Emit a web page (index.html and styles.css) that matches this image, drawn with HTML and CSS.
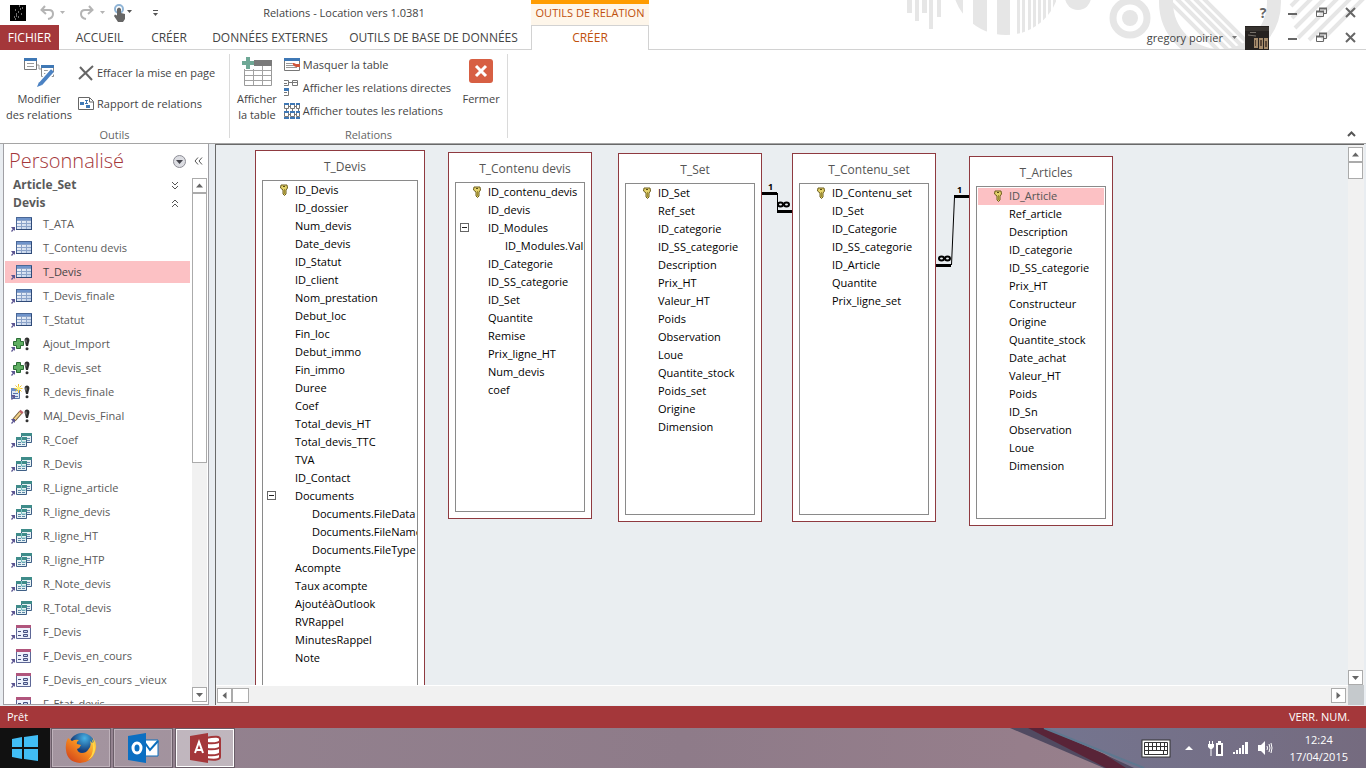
FILE: index.html
```html
<!DOCTYPE html>
<html lang="fr">
<head>
<meta charset="utf-8">
<title>Relations - Location vers 1.0381</title>
<link rel="stylesheet" href="styles.css">
</head>
<body>
<svg class="sprite" aria-hidden="true">
  <defs>
    <linearGradient id="cell" x1="0" y1="0" x2="1" y2="1"><stop offset="0" stop-color="#fff"/><stop offset="1" stop-color="#b9cbe6"/></linearGradient>
    <symbol id="arrow" viewBox="0 0 5 5"><path d="M0 0h4v4L2.800 2.800 1 5 0 4l1.700-1.800z" fill="#5b5591"/></symbol>
    <symbol id="i-table" viewBox="0 0 22 16">
      <rect x="5.500" y="1.500" width="15" height="12" fill="url(#cell)" stroke="#4a6796"/>
      <path d="M6 2h14v2H6z" fill="#6f94cb"/>
      <path d="M6 4.500h14M6 7.500h14M6 10.500h14M10.500 4v9M15.500 4v9" stroke="#8ba3c9" fill="none"/>
      <path d="M5 13.500h16M20.500 2v12" stroke="#2f4a78"/>
      <use href="#arrow" x="0" y="11" width="5" height="5"/>
    </symbol>
    <symbol id="bang" viewBox="0 0 6 14"><path d="M1 1.500Q3-.5 5 1.500 5.800 3 5 5L4 9H2L1 5Q.2 3 1 1.500z" fill="#2b2b2b"/><circle cx="3" cy="11.700" r="1.500" fill="#333"/><path d="M2 2.500v3" stroke="#999"/></symbol>
    <symbol id="i-add" viewBox="0 0 22 16">
      <path d="M5.500 2.500h4v3h3v4h-3v3h-4v-3h-3v-4h3z" fill="#5fae62" stroke="#2a6c35"/>
      <use href="#bang" x="13" y="1" width="6" height="14"/><use href="#arrow" x="0" y="11" width="5" height="5"/>
    </symbol>
    <symbol id="i-make" viewBox="0 0 22 16">
      <path d="M.5 4.500h8v10h-8z" fill="#dbe6f5" stroke="#5775a8"/><path d="M0 4h9v3H0z" fill="#6d8fc6"/><path d="M2 9.500h5M2 12.500h5" stroke="#5775a8"/>
      <path d="M7.500 0v9M3.500 4.500h8M4.500 1.500l6 6M10.500 1.500l-6 6" stroke="#f0c22d"/><circle cx="7.500" cy="4.500" r="2" fill="#fff27a"/>
      <use href="#bang" x="13" y="1" width="6" height="14"/><use href="#arrow" x="0" y="11" width="5" height="5"/>
    </symbol>
    <symbol id="i-update" viewBox="0 0 22 16">
      <path d="M3 12L10 4" stroke="#6f5a34" stroke-width="4"/><path d="M3 12L10 4" stroke="#f1cf8a" stroke-width="2"/><path d="M9.500 4.700L11 3" stroke="#c0606a" stroke-width="4"/>
      <use href="#bang" x="13" y="1" width="6" height="14"/><use href="#arrow" x="0" y="11" width="5" height="5"/>
    </symbol>
    <symbol id="i-query" viewBox="0 0 22 16">
      <path d="M10.500 1.500h10v9h-10z" fill="#e6f1f3" stroke="#3f5f86"/><path d="M10 1h11v3H10z" fill="#3f8c8a"/><path d="M12 6.500h3M16 6.500h3M16 8.500h3" stroke="#6a8db2"/>
      <path d="M5.500 5.500h10v9h-10z" fill="#e6f1f3" stroke="#3f5f86"/><path d="M5 5h11v3H5z" fill="#3f8c8a"/><path d="M7 10.500h3M11 10.500h3M7 12.500h3M11 12.500h3" stroke="#5b86a8"/><path d="M10.500 5v5H15" stroke="#77bfc0" fill="none"/>
      <use href="#arrow" x="0" y="11" width="5" height="5"/>
    </symbol>
    <symbol id="i-form" viewBox="0 0 22 16">
      <path d="M5.500 1.500h14v13h-14z" fill="#eef2fc" stroke="#5d6796"/><path d="M5 1h15v3H5z" fill="#b0557c"/>
      <path d="M7 7.500h3M7 11.500h3" stroke="#46507f"/><path d="M12.500 6.500h4v2h-4zM12.500 10.500h4v2h-4z" fill="#c4d3ef" stroke="#46507f"/>
      <use href="#arrow" x="0" y="11" width="5" height="5"/>
    </symbol>
    <symbol id="key" viewBox="0 0 8 12"><path d="M1 1h6l.5 3L6 6v4L4.500 11.500 3 10V6L.5 4z" fill="#e4d36b" stroke="#6b5d1e"/><path d="M3 2.500h2" stroke="#574b15"/><path d="M4.500 5v5" stroke="#a08f35"/></symbol>
    <symbol id="up" viewBox="0 0 9 9"><path d="M1 6.500h7L4.500 2.500z" fill="#666"/></symbol>
    <symbol id="down" viewBox="0 0 9 9"><path d="M1 3h7L4.500 7z" fill="#666"/></symbol>
    <symbol id="left" viewBox="0 0 9 9"><path d="M6.500 1v7l-4-3.500z" fill="#666"/></symbol>
    <symbol id="right" viewBox="0 0 9 9"><path d="M2.500 1v7l4-3.500z" fill="#666"/></symbol>
    <symbol id="min" viewBox="0 0 11 11"><path d="M1 7h9" stroke="#666" stroke-width="2"/></symbol>
    <symbol id="restore" viewBox="0 0 11 11"><path d="M3.500 4V1.500h7v5H8M.5 4.500h7v5h-7z" fill="none" stroke="#666"/><path d="M3 1.500h8M0 4.500h8" stroke="#666" stroke-width="2"/></symbol>
    <symbol id="close" viewBox="0 0 11 11"><path d="M1 1l9 9M10 1l-9 9" stroke="#666" stroke-width="2"/></symbol>
  </defs>
</svg>

<header class="top">
  <svg class="decor" viewBox="860 0 506 49" aria-hidden="true">
    <defs>
      <clipPath id="disk"><circle cx="1006" cy="-19" r="54"/></clipPath>
      <clipPath id="hole"><circle cx="1220" cy="2" r="61"/></clipPath>
    </defs>
    <g fill="#e6e6e6">
      <path d="M907 0h5v13h-5zM915 0h4v21h-4zM922 0h5v13h-5zM929 0h4v29h-4zM937 0h4v17h-4z"/>
      <path clip-path="url(#disk)" d="M955 0h8v30h-8zM973 0h14v40h-14zM997 0h13v40h-13zM1017 0h3v40h-3zM1022 0h3v40h-3zM1028 0h3v40h-3zM1033 0h3v40h-3zM1038 0h3v40h-3zM1043 0h3v40h-3zM1048 0h3v40h-3zM1053 0h3v40h-3z"/>
      <circle cx="1078" cy="-3" r="13"/>
    </g>
    <circle cx="1130" cy="18" r="17" fill="none" stroke="#e6e6e6" stroke-width="7"/><circle cx="1130" cy="18" r="8" fill="#e6e6e6"/>
    <circle cx="1220" cy="2" r="54" fill="none" stroke="#e6e6e6" stroke-width="14"/>
    <path clip-path="url(#hole)" d="M1160-8l70 70M1174-4l60 60M1183-4l60 60M1192-4l56 56M1201-4l50 50" stroke="#e6e6e6" stroke-width="4"/>
    <path d="M1303-6l-12 12M1316-6l-24 24M1329-6l-34 34M1342-6l-44 44M1355-6l-46 46M1368-6l-46 46" stroke="#e6e6e6" stroke-width="4"/>
  </svg>
  <div class="top-left">
    <div class="titlebar">
      <div class="qat">
        <svg width="16" height="16" viewBox="0 0 16 16"><path d="M0 0h16v16H0z" fill="#000"/><path d="M9 1h1M12 3h1M5 5h1M8 7h1M6 9h1M11 9h1M4 12h1M5 14h1M8 12h1M6 11h1M10 4h1" stroke="#ddd"/></svg>
        <button aria-label="Annuler"><svg width="26" height="16" viewBox="0 0 26 16"><path d="M5 1L1.500 5 6 9M2 5h7q4 0 4 4t-5 5" fill="none" stroke="#b4b4b4" stroke-width="2"/><path d="M20 6h5l-2.500 3z" fill="#b4b4b4"/></svg></button>
        <button aria-label="Rétablir"><svg width="26" height="16" viewBox="0 0 26 16"><path d="M9 1l3.500 4L8 9M12 5H5Q1 5 1 9t5 5" fill="none" stroke="#b4b4b4" stroke-width="2"/><path d="M20 6h5l-2.500 3z" fill="#b4b4b4"/></svg></button>
        <button aria-label="Mode tactile"><svg width="24" height="18" viewBox="0 0 24 18"><circle cx="5" cy="5" r="4" fill="none" stroke="#8fb4d6" stroke-width="2"/><path d="M3 5q2-3 4 0v4l4 1v5l-2 3H4L0 12l1-1.500 2 1z" fill="#666"/><path d="M13 6h5l-2.500 3z" fill="#555"/></svg></button>
        <button aria-label="Personnaliser"><svg width="7" height="8" viewBox="0 0 7 8"><path d="M1 1.500h5" stroke="#555"/><path d="M1 4h5L3.500 7z" fill="#555"/></svg></button>
      </div>
      <h1 class="title">Relations - Location vers 1.0381</h1>
    </div>
    <nav class="tabs">
      <button class="tab tab-file">FICHIER</button>
      <button class="tab tab-home">ACCUEIL</button>
      <button class="tab tab-create">CRÉER</button>
      <button class="tab tab-data">DONNÉES EXTERNES</button>
      <button class="tab tab-tools">OUTILS DE BASE DE DONNÉES</button>
    </nav>
  </div>
  <div class="context">
    <div class="context-name">OUTILS DE RELATION</div>
    <button class="context-tab">CRÉER</button>
  </div>
  <div class="top-right">
    <div class="winrow">
      <button class="help" aria-label="Aide">?</button>
      <button aria-label="Réduire"><svg width="11" height="11"><use href="#min"/></svg></button>
      <button aria-label="Restaurer"><svg width="11" height="11"><use href="#restore"/></svg></button>
      <button aria-label="Fermer la fenêtre"><svg width="11" height="11"><use href="#close"/></svg></button>
    </div>
    <div class="winrow">
      <button class="account">gregory poirier <svg width="5" height="3" viewBox="0 0 5 3"><path d="M0 0h5L2.500 3z" fill="#777"/></svg></button>
      <svg class="avatar" width="24" height="24" viewBox="0 0 24 24"><path d="M0 0h24v24H0z" fill="#262220"/><path d="M0 1h24v4H0z" fill="#37332f"/><path d="M5 6.500h6M3 9l8 1" stroke="#77716a"/><path d="M9 12h4v10H9zM14 12h4v11h-4zM19 12h4v11h-4z" fill="#a58b6c"/><path d="M10 14h1v6h-1zM15 14h2v6h-2zM20 15h2v6h-2z" fill="#5a4636"/></svg>
      <button aria-label="Réduire le document"><svg width="11" height="11"><use href="#min"/></svg></button>
      <button aria-label="Restaurer le document"><svg width="11" height="11"><use href="#restore"/></svg></button>
      <button aria-label="Fermer le document"><svg width="11" height="11"><use href="#close"/></svg></button>
    </div>
  </div>
</header>

<section class="ribbon">
  <div class="group group-tools">
    <div class="group-body">
      <button class="big big-edit">
        <svg width="32" height="32" viewBox="0 0 32 32"><path d="M1.500 1.500h12v11h-12z" fill="#fff" stroke="#777"/><path d="M1 1h13v3H1z" fill="#3f78b5"/><path d="M4 6.500h7M4 9.500h7" stroke="#9a9a9a"/><path d="M14 8h2v4h3" fill="none" stroke="#999"/><path d="M18.500 8.500h12v11h-12z" fill="#fff" stroke="#888"/><path d="M18 8h13v3H18z" fill="#3f78b5"/><path d="M21 13.500h6M21 16.500h4" stroke="#9a9a9a"/><path d="M29 14L17 28" stroke="#fff" stroke-width="7"/><path d="M29.500 13.500L17.500 27" stroke="#4b82c3" stroke-width="4"/><path d="M16 25l3 3-5 2z" fill="#4b82c3"/></svg>
        <span>Modifier<br>des relations</span>
      </button>
      <div class="stack stack-two">
        <button class="small"><svg width="16" height="16" viewBox="0 0 16 16"><path d="M2 2l12 13M15 1L1 14" stroke="#666" stroke-width="2"/></svg>Effacer la mise en page</button>
        <button class="small"><svg width="16" height="16" viewBox="0 0 16 16"><path d="M.5 1.500h11l4 4v8H.5z" fill="#fff" stroke="#666"/><path d="M11.500 2v4h4" fill="none" stroke="#666"/><path d="M2 6h4v3H2zM8 9h4v3H8z" fill="#3f78b5"/><path d="M7 4.500h3M7 7.500h3M8.500 4v4" stroke="#3f78b5"/></svg>Rapport de relations</button>
      </div>
    </div>
    <div class="group-name">Outils</div>
  </div>
  <div class="group group-rel">
    <div class="group-body">
      <button class="big big-show">
        <svg width="32" height="32" viewBox="0 0 32 32"><path d="M3.500 4.500h27v24h-27z" fill="#fff" stroke="#9a9a9a"/><path d="M13 3h18v6H13z" fill="#7a7a7a"/><path d="M4 13.500h26M4 18.500h26M4 23.500h26M12.500 9v19M21.500 9v19" stroke="#a2a2a2"/><path d="M0 0h13v12H0z" fill="#fff"/><path d="M3.500 12v3M4 13.500h9M12.500 12v3" stroke="#a2a2a2"/><path d="M5 0h4v4h4v4H9v4H5V8H1V4h4z" fill="#6fa896"/></svg>
        <span>Afficher<br>la table</span>
      </button>
      <div class="stack stack-three">
        <button class="small"><svg width="16" height="16" viewBox="0 0 16 16"><path d="M.5 1.500h15v12H.5z" fill="#fff" stroke="#777"/><path d="M0 1h16v3H0z" fill="#3f78b5"/><path d="M2 6.500h6M2 8.500h8M2 10.500h11" stroke="#999"/><path d="M8 6h2l2 1h4v3h-4l-2-1z" fill="#d0553a"/></svg>Masquer la table</button>
        <button class="small"><svg width="16" height="16" viewBox="0 0 16 16"><path d="M0 .5h4.500v5H0M0 3.500h3M5 2.500h3M0 12.500h3M0 15.500h4.500V8" fill="none" stroke="#777"/><path d="M8.500 .5h5v5h-5zM8 2.500h6" fill="#fff" stroke="#777"/><path d="M0 8h5v3H0z" fill="#3f78b5"/></svg>Afficher les relations directes</button>
        <button class="small"><svg width="16" height="16" viewBox="0 0 16 16"><path d="M.5 1.500h4v4h-4zM6.500 1.500h4v4h-4zM12.500 1.500h3v4h-3zM.5 9.500h4v4h-4zM6.500 9.500h4v4h-4zM12.500 9.500h3v4h-3zM5 3.500h1M11 3.500h1M5 11.500h1M11 11.500h1M2.500 6v3M8.500 6v3M14.500 6v3" fill="none" stroke="#777"/><path d="M0 0h5v2H0zM6 0h5v2H6zM12 0h4v2h-4zM0 8h5v2H0zM6 8h5v2H6zM12 8h4v2h-4zM0 14h5v2H0zM6 14h5v2H6zM12 14h4v2h-4z" fill="#3f78b5"/></svg>Afficher toutes les relations</button>
      </div>
      <button class="big big-close">
        <svg width="32" height="32" viewBox="0 0 32 32"><rect x="4" y="2" width="24" height="24" rx="3" fill="#d75f43"/><path d="M11 9l10 10M21 9L11 19" stroke="#fff" stroke-width="3"/></svg>
        <span>Fermer</span>
      </button>
    </div>
    <div class="group-name">Relations</div>
  </div>
  <button class="collapse" aria-label="Réduire le ruban"><svg width="9" height="6" viewBox="0 0 9 6"><path d="M1 5l3.500-3.500L8 5" fill="none" stroke="#555" stroke-width="2"/></svg></button>
</section>

<main class="work">
  <aside class="nav">
    <div class="nav-head">
      <h2>Personnalisé</h2>
      <button aria-label="Options"><svg width="13" height="13" viewBox="0 0 13 13"><circle cx="6.500" cy="6.500" r="6" fill="#dcdde2" stroke="#8d8d95"/><path d="M3 5h7L6.500 9z" fill="#44444c"/></svg></button>
      <button aria-label="Masquer le volet"><svg width="9" height="8" viewBox="0 0 9 8"><path d="M4 .5L1 4l3 3.500M8 .5L5 4l3 3.500" fill="none" stroke="#555"/></svg></button>
    </div>
    <div class="nav-body">
      <div class="nav-list">
        <button class="nav-group">Article_Set <svg width="8" height="9" viewBox="0 0 8 9"><path d="M1 1l3 3 3-3M1 5l3 3 3-3" fill="none" stroke="#555"/></svg></button>
        <button class="nav-group">Devis <svg width="8" height="9" viewBox="0 0 8 9"><path d="M1 4l3-3 3 3M1 8l3-3 3 3" fill="none" stroke="#555"/></svg></button>
        <ul>
          <li><a href="#"><svg><use href="#i-table"/></svg>T_ATA</a></li>
          <li><a href="#"><svg><use href="#i-table"/></svg>T_Contenu devis</a></li>
          <li><a href="#" class="selected"><svg><use href="#i-table"/></svg>T_Devis</a></li>
          <li><a href="#"><svg><use href="#i-table"/></svg>T_Devis_finale</a></li>
          <li><a href="#"><svg><use href="#i-table"/></svg>T_Statut</a></li>
          <li><a href="#"><svg><use href="#i-add"/></svg>Ajout_Import</a></li>
          <li><a href="#"><svg><use href="#i-add"/></svg>R_devis_set</a></li>
          <li><a href="#"><svg><use href="#i-make"/></svg>R_devis_finale</a></li>
          <li><a href="#"><svg><use href="#i-update"/></svg>MAJ_Devis_Final</a></li>
          <li><a href="#"><svg><use href="#i-query"/></svg>R_Coef</a></li>
          <li><a href="#"><svg><use href="#i-query"/></svg>R_Devis</a></li>
          <li><a href="#"><svg><use href="#i-query"/></svg>R_Ligne_article</a></li>
          <li><a href="#"><svg><use href="#i-query"/></svg>R_ligne_devis</a></li>
          <li><a href="#"><svg><use href="#i-query"/></svg>R_ligne_HT</a></li>
          <li><a href="#"><svg><use href="#i-query"/></svg>R_ligne_HTP</a></li>
          <li><a href="#"><svg><use href="#i-query"/></svg>R_Note_devis</a></li>
          <li><a href="#"><svg><use href="#i-query"/></svg>R_Total_devis</a></li>
          <li><a href="#"><svg><use href="#i-form"/></svg>F_Devis</a></li>
          <li><a href="#"><svg><use href="#i-form"/></svg>F_Devis_en_cours</a></li>
          <li><a href="#"><svg><use href="#i-form"/></svg>F_Devis_en_cours _vieux</a></li>
          <li><a href="#"><svg><use href="#i-form"/></svg>F_Etat_devis</a></li>
        </ul>
      </div>
      <div class="vbar">
        <button aria-label="Monter"><svg width="9" height="9"><use href="#up"/></svg></button>
        <div class="thumb thumb-nav"></div>
        <button class="last" aria-label="Descendre"><svg width="9" height="9"><use href="#down"/></svg></button>
      </div>
    </div>
  </aside>

  <section class="pane">
    <div class="canvas">
      <article class="entity t-devis">
        <h3>T_Devis</h3>
        <ul>
          <li><svg class="key"><use href="#key"/></svg><span>ID_Devis</span></li>
          <li><span>ID_dossier</span></li><li><span>Num_devis</span></li><li><span>Date_devis</span></li><li><span>ID_Statut</span></li><li><span>ID_client</span></li><li><span>Nom_prestation</span></li><li><span>Debut_loc</span></li><li><span>Fin_loc</span></li><li><span>Debut_immo</span></li><li><span>Fin_immo</span></li><li><span>Duree</span></li><li><span>Coef</span></li><li><span>Total_devis_HT</span></li><li><span>Total_devis_TTC</span></li><li><span>TVA</span></li><li><span>ID_Contact</span></li>
          <li><button class="fold" aria-label="Replier Documents"></button><span>Documents</span></li>
          <li class="sub"><span>Documents.FileData</span></li><li class="sub"><span>Documents.FileName</span></li><li class="sub"><span>Documents.FileType</span></li>
          <li><span>Acompte</span></li><li><span>Taux acompte</span></li><li><span>AjoutéàOutlook</span></li><li><span>RVRappel</span></li><li><span>MinutesRappel</span></li><li><span>Note</span></li>
        </ul>
      </article>
      <article class="entity t-contenu-devis">
        <h3>T_Contenu devis</h3>
        <ul>
          <li><svg class="key"><use href="#key"/></svg><span>ID_contenu_devis</span></li>
          <li><span>ID_devis</span></li>
          <li><button class="fold" aria-label="Replier ID_Modules"></button><span>ID_Modules</span></li>
          <li class="sub"><span>ID_Modules.Value</span></li>
          <li><span>ID_Categorie</span></li><li><span>ID_SS_categorie</span></li><li><span>ID_Set</span></li><li><span>Quantite</span></li><li><span>Remise</span></li><li><span>Prix_ligne_HT</span></li><li><span>Num_devis</span></li><li><span>coef</span></li>
        </ul>
      </article>
      <article class="entity t-set">
        <h3>T_Set</h3>
        <ul>
          <li><svg class="key"><use href="#key"/></svg><span>ID_Set</span></li>
          <li><span>Ref_set</span></li><li><span>ID_categorie</span></li><li><span>ID_SS_categorie</span></li><li><span>Description</span></li><li><span>Prix_HT</span></li><li><span>Valeur_HT</span></li><li><span>Poids</span></li><li><span>Observation</span></li><li><span>Loue</span></li><li><span>Quantite_stock</span></li><li><span>Poids_set</span></li><li><span>Origine</span></li><li><span>Dimension</span></li>
        </ul>
      </article>
      <article class="entity t-contenu-set">
        <h3>T_Contenu_set</h3>
        <ul>
          <li><svg class="key"><use href="#key"/></svg><span>ID_Contenu_set</span></li>
          <li><span>ID_Set</span></li><li><span>ID_Categorie</span></li><li><span>ID_SS_categorie</span></li><li><span>ID_Article</span></li><li><span>Quantite</span></li><li><span>Prix_ligne_set</span></li>
        </ul>
      </article>
      <article class="entity t-articles">
        <h3>T_Articles</h3>
        <ul>
          <li class="picked"><svg class="key"><use href="#key"/></svg><span>ID_Article</span></li>
          <li><span>Ref_article</span></li><li><span>Description</span></li><li><span>ID_categorie</span></li><li><span>ID_SS_categorie</span></li><li><span>Prix_HT</span></li><li><span>Constructeur</span></li><li><span>Origine</span></li><li><span>Quantite_stock</span></li><li><span>Date_achat</span></li><li><span>Valeur_HT</span></li><li><span>Poids</span></li><li><span>ID_Sn</span></li><li><span>Observation</span></li><li><span>Loue</span></li><li><span>Dimension</span></li>
        </ul>
      </article>
      <svg class="links" width="220" height="100" viewBox="760 170 220 100">
        <path d="M762 193.500h15M777 211.500h15M936 265.500h15M954 196.500h15" stroke="#000" stroke-width="3"/>
        <path d="M777.500 193v18M951.500 265L954.500 197" stroke="#000"/>
        <g fill="none" stroke="#000" stroke-width="2"><ellipse cx="780.500" cy="204.500" rx="2.500" ry="2"/><ellipse cx="786.500" cy="204.500" rx="2.500" ry="2"/><ellipse cx="941.500" cy="258.500" rx="2.500" ry="2"/><ellipse cx="947.500" cy="258.500" rx="2.500" ry="2"/></g>
        <text x="768" y="190">1</text><text x="957" y="193">1</text>
      </svg>
    </div>
    <div class="vbar vbar-pane">
      <button aria-label="Monter"><svg width="9" height="9"><use href="#up"/></svg></button>
      <div class="thumb thumb-v"></div>
      <button class="last" aria-label="Descendre"><svg width="9" height="9"><use href="#down"/></svg></button>
    </div>
    <div class="hbar">
      <button aria-label="Gauche"><svg width="9" height="9"><use href="#left"/></svg></button>
      <div class="thumb thumb-h"></div>
      <button class="last" aria-label="Droite"><svg width="9" height="9"><use href="#right"/></svg></button>
    </div>
    <div class="corner"></div>
  </section>
</main>

<div class="status"><span>Prêt</span><span>VERR. NUM.</span></div>

<footer class="taskbar">
  <svg class="wall" viewBox="0 0 1366 40" preserveAspectRatio="none" aria-hidden="true">
    <defs>
      <linearGradient id="w1"><stop offset="0" stop-color="#958491"/><stop offset=".5" stop-color="#8e7b89"/><stop offset=".75" stop-color="#967e8b"/><stop offset="1" stop-color="#9b848d"/></linearGradient>
      <linearGradient id="w2"><stop offset="0" stop-color="#747590"/><stop offset="1" stop-color="#756b7f"/></linearGradient>
    </defs>
    <path d="M0 0h1366v40H0z" fill="url(#w1)"/>
    <path d="M1040 0h326v40h-234L1104 25z" fill="url(#w2)"/>
    <path d="M1010 0h35l59 26 30 14h-30z" fill="#514a61"/>
    <path d="M1028 0h16l60 26 22 14h-20z" fill="#592438"/>
    <path d="M1044 0l60 24 40 16" stroke="#5e7890" stroke-width="2" fill="none"/>
  </svg>
  <button class="start" aria-label="Démarrer"><svg width="26" height="26" viewBox="0 0 26 26"><path d="M0 4l10-2v10H0zM12 2l14-2v12H12zM0 14h10v10L0 22zM12 14h14v12l-14-2z" fill="#41bdf5"/></svg></button>
  <button class="app" aria-label="Firefox"><svg width="32" height="32" viewBox="0 0 32 32">
    <defs><radialGradient id="globe" cx=".6" cy=".2"><stop offset="0" stop-color="#47b2e6"/><stop offset="1" stop-color="#153e7c"/></radialGradient><linearGradient id="fox" x1="1" y1="0" x2="0" y2="1"><stop offset="0" stop-color="#ffe04d"/><stop offset=".45" stop-color="#f68b1f"/><stop offset="1" stop-color="#c9341a"/></linearGradient></defs>
    <circle cx="17" cy="14" r="13" fill="url(#globe)"/>
    <path d="M3 6l4 3q3-2 7-1-3 2-2 4l4 1q-1 3-4 4 1 4 5 4 4 0 6-3 4-4 2-9 5 5 3-3 5 6 2 14-4 11-15 11Q2 30 1 18 0 11 3 6z" fill="url(#fox)"/><path d="M26 6q4 5 4 12-1 7-7 10 5-5 5-12t-2-10z" fill="#ffd94a"/></svg></button>
  <button class="app" aria-label="Outlook"><svg width="32" height="32" viewBox="0 0 32 32"><path d="M17 8h14v16H17z" fill="#fff" stroke="#0a6ebd"/><path d="M18 11l5 7 8-9" fill="none" stroke="#0a6ebd" stroke-width="2"/><path d="M1 4l18-3v30L1 28z" fill="#0b6fc2"/><ellipse cx="10" cy="16" rx="4" ry="5" fill="none" stroke="#fff" stroke-width="3"/></svg></button>
  <button class="app app-on" aria-label="Access"><svg width="32" height="32" viewBox="0 0 32 32"><path d="M17 6q14-3 14 1v18q0 4-14 2z" fill="#fff" stroke="#a4373a" stroke-width="2"/><path d="M18 11q11 1 13-2M18 17q11 1 13-2M18 23q11 1 13-2" fill="none" stroke="#a4373a" stroke-width="2"/><path d="M1 4l18-3v30L1 28z" fill="#a4373a"/><path d="M6 21l4-11 4 11M7 18h6" fill="none" stroke="#fff" stroke-width="2"/></svg></button>
  <div class="tray">
    <svg width="30" height="19" viewBox="0 0 30 19"><rect x="1" y="1" width="28" height="17" fill="#fff" stroke="#333" stroke-width="1"/><path d="M3.500 3.500h23v12h-23zM3 7.500h24M3 11.500h24M7.500 3v8M11.500 3v8M15.500 3v8M19.500 3v8M23.500 3v8M7.500 11v4M22.500 11v4" fill="none" stroke="#333"/></svg>
    <svg width="9" height="6" viewBox="0 0 9 6"><path d="M0 5h8L4 1z" fill="#fff"/></svg>
    <svg width="16" height="17" viewBox="0 0 16 17"><path d="M1.500 1v3M4.500 1v3M3 8v8" stroke="#fff"/><path d="M0 4h6v3L4 9H2L0 7z" fill="#fff"/><path d="M8 3h7v13H8zM10 1h3v2h-3z" fill="#fff"/><path d="M10 5h3v9h-3z" fill="#56505f"/></svg>
    <svg width="16" height="14" viewBox="0 0 16 14"><path d="M0 11h2v2H0zM3 9h2v4H3zM6 7h2v6H6zM9 4h2v9H9zM12 1h3v12h-3z" fill="#fff"/></svg>
    <svg width="15" height="14" viewBox="0 0 15 14"><path d="M0 4h3l4-4v14L3 10H0z" fill="#fff"/><path d="M9 5q1 2 0 4M11 3q2 4 0 8M13 2q2 5 0 10" fill="none" stroke="#fff"/></svg>
    <div class="clock"><time>12:24</time><time>17/04/2015</time></div>
  </div>
</footer>
</body>
</html>
```
FILE: styles.css
```css
* { box-sizing: border-box; }
body { margin: 0; height: 100vh; overflow: hidden; display: flex; flex-direction: column; background: #fff; color: #444; font: 11px/16px "Open Sans", "Noto Sans", sans-serif; }
button { margin: 0; padding: 0; border: 0; background: none; color: inherit; font: inherit; }
svg { display: block; flex: none; }
ul { list-style: none; margin: 0; padding: 0; }
h1, h2, h3 { margin: 0; font-weight: 400; }
a { color: inherit; text-decoration: none; }
.sprite { position: absolute; width: 0; height: 0; }

/* Title bar and tabs */
.top { position: relative; display: flex; height: 50px; flex: none; }
.top::after { content: ""; position: absolute; left: 0; right: 0; bottom: 0; height: 1px; background: #d2d2d2; }
.decor { position: absolute; right: 0; top: 0; width: 506px; height: 49px; }
.top-left { display: flex; flex-direction: column; width: 531px; }
.titlebar { display: flex; height: 25px; align-items: center; }
.qat { display: flex; align-items: center; gap: 14px; padding-left: 10px; }
.qat button:nth-last-child(2) { margin-left: -6px; }
.title { flex: 1; text-align: center; font-size: 11px; padding-right: 2px; }
.tabs { display: flex; height: 25px; font-size: 12px; }
.tab-file { width: 59px; background: #a4373a; color: #fff; position: relative; z-index: 1; }
.tab-home { width: 81px; }
.tab-create { width: 58px; }
.tab-data { width: 144px; }
.tab-tools { width: 183px; }
.context { display: flex; flex-direction: column; width: 118px; position: relative; z-index: 1; color: #c0500c; }
.context-name { height: 25px; border-top: 4px solid #ff9c00; background: #fef6ea; text-align: center; line-height: 18px; }
.context-tab { flex: 1; border: 1px solid #d2d2d2; border-bottom: 0; background: #fff; font-size: 12px; }
.top-right { flex: 1; position: relative; z-index: 1; }
.winrow { display: flex; height: 25px; justify-content: flex-end; align-items: center; gap: 18px; padding-right: 10px; }
.help { font-weight: 700; font-size: 14px; width: 12px; color: #666; }
.account { display: flex; align-items: center; gap: 9px; font-size: 11px; }
.avatar { margin: 0 0 0 -10px; }

/* Ribbon */
.ribbon { display: flex; flex: none; height: 93px; position: relative; }
.group { display: flex; flex-direction: column; border-right: 1px solid #dadada; margin-top: 4px; height: 84px; }
.group-tools { width: 230px; }
.group-rel { width: 278px; }
.group-body { display: flex; height: 72px; }
.group-name { text-align: center; line-height: 16px; padding-top: 4px; color: #666; }
.big { display: flex; flex-direction: column; align-items: center; text-align: center; padding-top: 3px; gap: 2px; }
.big-edit { width: 78px; }
.big-show { width: 54px; }
.big-close { width: 52px; }
.stack { display: flex; flex-direction: column; white-space: nowrap; }
.stack-two { padding-top: 11px; gap: 15px; }
.stack-three { padding-top: 3px; gap: 7px; width: 172px; }
.small { display: flex; align-items: center; gap: 3px; text-align: left; }
.collapse { position: absolute; right: 10px; bottom: 6px; }

/* Navigation pane */
.work { flex: 1; display: flex; min-height: 0; border-top: 1px solid #a5a5a5; background: #e9edf1; }
.nav { width: 206px; margin: 0 6px 1px 3px; border: 1px solid #a0a0a5; border-top: 0; background: #fff; display: flex; flex-direction: column; color: #5a5a5a; }
.nav-head { display: flex; align-items: center; height: 34px; gap: 8px; padding: 0 5px; }
.nav-head h2 { flex: 1; font-size: 20px; font-weight: 300; line-height: 34px; color: #a4373a; }
.nav-body { flex: 1; display: flex; min-height: 0; }
.nav-list { flex: 1; overflow: hidden; padding-left: 1px; margin-top: -2px; }
.nav-group { display: flex; align-items: center; justify-content: space-between; width: 100%; height: 18px; padding: 0 13px 0 8px; font-weight: 700; font-size: 12px; }
.nav-list li { height: 24px; padding: 1px 2px 1px 0; }
.nav-list a { display: flex; align-items: center; height: 22px; padding-left: 6px; gap: 10px; white-space: nowrap; }
.nav-list a svg { width: 22px; height: 16px; }
.nav-list .selected { background: #fcc1c4; color: #444; }

/* Scroll bars */
.vbar { width: 15px; margin: 0 1px 2px 0; background: #f1f1f1; display: flex; flex-direction: column; }
.vbar button, .hbar button { width: 15px; height: 15px; flex: none; border: 1px solid #ababab; background: #fff; display: flex; align-items: center; justify-content: center; }
.thumb { border: 1px solid #ababab; background: #fff; }
.thumb-nav { height: 270px; }
.vbar .last { margin-top: auto; }
.hbar { display: flex; align-items: center; background: #f1f1f1; border-top: 1px solid #fff; padding: 0 2px 0 1px; }
.hbar .last { margin-left: auto; }
.thumb-h { width: 17px; height: 15px; }
.thumb-v { height: 17px; }
.vbar-pane { margin: 2px 0 0; }
.corner { background: #c5c9cc; }

/* Relationship diagram */
.pane { flex: 1; min-width: 0; display: grid; grid-template-columns: 1fr 16px; grid-template-rows: 1fr 20px; margin: 0 2px 1px 0; border-left: 1px solid #696969; border-top: 1px solid #696969; background: #f1f1f1; }
.canvas { position: relative; overflow: hidden; background: #eaeef1; }
.entity { position: absolute; width: 144px; display: flex; flex-direction: column; padding: 0 6px 6px; border: 1px solid #8f3a40; background: #fff; color: #000; }
.entity h3 { text-align: center; height: 29px; line-height: 32px; padding-left: 10px; font-size: 12px; color: #555; }
.entity ul { flex: 1; border: 1px solid #8a8a8a; overflow: hidden; }
.entity li { position: relative; height: 18px; line-height: 18px; padding-left: 32px; white-space: nowrap; }
.entity .sub { padding-left: 49px; }
.key { position: absolute; left: 17px; top: 3px; width: 8px; height: 12px; }
.fold { position: absolute; left: 4px; top: 4px; width: 9px; height: 9px; border: 1px solid #666; }
.fold::after { content: ""; position: absolute; left: 1px; top: 3px; width: 5px; height: 1px; background: #222; }
.entity .picked { height: 17px; line-height: 16px; margin: 1px 1px 0; padding-left: 31px; background: #fcc1c4; color: #555; }
.picked .key { left: 16px; top: 2px; }
.t-devis { left: 39px; top: 5px; width: 170px; height: 560px; }
.t-contenu-devis { left: 232px; top: 7px; height: 367px; }
.t-set { left: 402px; top: 8px; height: 369px; }
.t-contenu-set { left: 576px; top: 8px; height: 369px; }
.t-articles { left: 753px; top: 11px; height: 370px; }
.links { position: absolute; left: 544px; top: 25px; }
.links text { font: 700 9px "Open Sans", sans-serif; }

/* Status bar and taskbar */
.status { flex: none; height: 22px; padding: 0 16px 0 7px; display: flex; align-items: center; justify-content: space-between; background: #a4373a; color: #fff; }
.taskbar { flex: none; height: 40px; position: relative; display: flex; gap: 2px; }
.wall { position: absolute; left: 0; top: 0; width: 100%; height: 100%; }
.start { position: relative; width: 50px; background: #111; display: flex; align-items: center; justify-content: center; margin-right: -1px; }
.app { position: relative; width: 60px; display: flex; align-items: center; justify-content: center; border: 1px solid #6a5d68; background: rgba(255, 255, 255, .14); box-shadow: inset 0 0 0 1px #bfb2bb; }
.app-on { background: rgba(255, 255, 255, .42); box-shadow: inset 0 0 0 1px #fff; }
.tray { position: relative; margin-left: auto; display: flex; align-items: center; gap: 9px; padding-right: 18px; color: #fff; }
.tray svg:nth-child(1), .tray svg:nth-child(2) { margin-right: 5px; }
.clock { display: flex; flex-direction: column; align-items: center; margin-left: 8px; line-height: 17px; }
```
